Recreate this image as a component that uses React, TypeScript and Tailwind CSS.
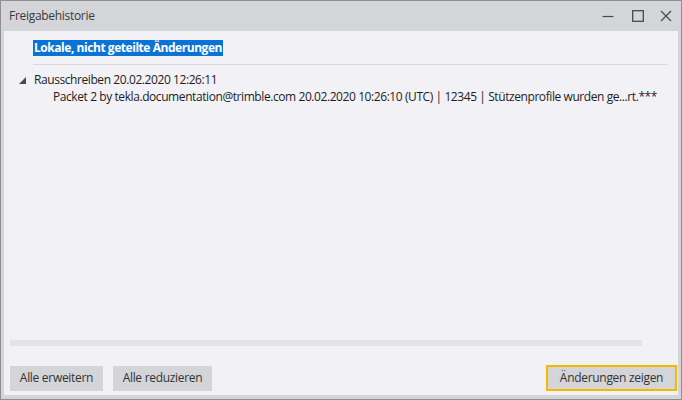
const font = { fontFamily: '"Open Sans", "Noto Sans", sans-serif' };

const App = () => {
  return (
    <div
      className="w-[682px] h-[400px] border border-[#8e8e94] bg-[#d4d5d9] flex flex-col text-[#1e1e1e]"
      style={font}
    >
      {/* title bar */}
      <div className="h-[30px] flex items-center pl-[8px] pr-[9px] shrink-0">
        <span className="text-[12px] text-[#3a3a3a] tracking-[-0.3px]">Freigabehistorie</span>
        <div className="ml-auto flex items-center text-[#4a4a4a]">
          <svg width="12" height="12" viewBox="0 0 12 12">
            <line x1="0.5" y1="6.5" x2="11.5" y2="6.5" stroke="currentColor" strokeWidth="1.2" />
          </svg>
          <svg width="12" height="12" viewBox="0 0 12 12" className="ml-[18px]">
            <rect x="0.7" y="0.7" width="10.6" height="10.6" fill="none" stroke="currentColor" strokeWidth="1.3" />
          </svg>
          <svg width="12" height="12" viewBox="0 0 12 12" className="ml-[16px]">
            <path d="M1 1 L11 11 M11 1 L1 11" stroke="currentColor" strokeWidth="1.2" />
          </svg>
        </div>
      </div>

      {/* content */}
      <div className="flex-1 mx-[3px] mb-[4px] bg-[#f1f1f6] flex flex-col">
        <div className="pl-[29px] pr-[10px] pt-[9px]">
          <div className="w-fit bg-[#0a74d6] text-white font-bold text-[12px] leading-[16px] px-[1px] tracking-[-0.45px]">
            Lokale, nicht geteilte Änderungen
          </div>
          <div className="h-px bg-[#d9d9de] mt-[8px]" />
        </div>

        <div className="pl-[15px] pt-[6px] text-[12px] leading-[17px] tracking-[-0.42px]">
          <div className="flex items-center">
            <svg width="7" height="7" viewBox="0 0 7 7" className="mr-[8px] mt-[2px]">
              <polygon points="7,0 7,7 0,7" fill="#4a4a4a" />
            </svg>
            <span>Rausschreiben 20.02.2020 12:26:11</span>
          </div>
          <div className="pl-[34px]">
            Packet 2 by tekla.documentation@trimble.com 20.02.2020 10:26:10 (UTC) | 12345 | Stützenprofile wurden ge...rt.***
          </div>
        </div>

        <div className="flex-1" />

        <div className="pl-[6px] pr-[36px]">
          <div className="h-[6px] bg-[#e3e3e9] rounded-[1px]" />
        </div>

        <div className="flex items-center pl-[6px] pr-[1px] pt-[19px] pb-[4px] text-[12px] tracking-[-0.3px]">
          <button className="w-[93px] h-[25px] bg-[#d4d5d9] text-[#333]">Alle erweitern</button>
          <button className="w-[99px] h-[25px] bg-[#d4d5d9] text-[#333] ml-[10px]">Alle reduzieren</button>
          <button className="ml-auto w-[131px] h-[26px] bg-[#d4d5d9] text-[#333] border-2 border-[#f5b800]">
            Änderungen zeigen
          </button>
        </div>
      </div>
    </div>
  );
};

export default App;
